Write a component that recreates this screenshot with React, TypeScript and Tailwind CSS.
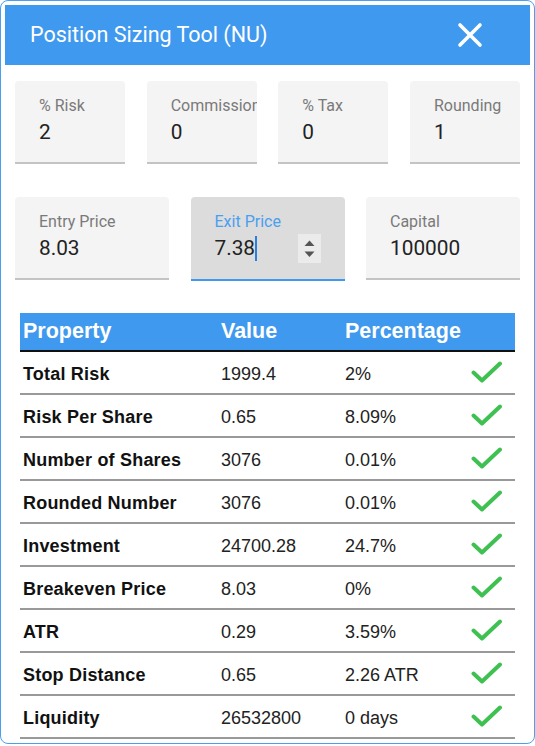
import React from "react"

const rows = [
  { name: "Total Risk", value: "1999.4", pct: "2%" },
  { name: "Risk Per Share", value: "0.65", pct: "8.09%" },
  { name: "Number of Shares", value: "3076", pct: "0.01%" },
  { name: "Rounded Number", value: "3076", pct: "0.01%" },
  { name: "Investment", value: "24700.28", pct: "24.7%" },
  { name: "Breakeven Price", value: "8.03", pct: "0%" },
  { name: "ATR", value: "0.29", pct: "3.59%" },
  { name: "Stop Distance", value: "0.65", pct: "2.26 ATR" },
  { name: "Liquidity", value: "26532800", pct: "0 days" },
]

const topFields = [
  { label: "% Risk", value: "2" },
  { label: "Commission", value: "0" },
  { label: "% Tax", value: "0" },
  { label: "Rounding", value: "1" },
]

function Field({ label, value, width }: { label: string; value: string; width: string }) {
  return (
    <div className={`${width} flex h-[83px] flex-col overflow-hidden rounded-t-[4px] border-b-2 border-[#c4c4c4] bg-[#f4f4f4] pl-6 pt-[15px]`}>
      <span className="whitespace-nowrap text-[16px] leading-[19px] text-[#7a7a7a]">{label}</span>
      <span className="mt-[5px] text-[20.8px] leading-[24px] text-[#222]">{value}</span>
    </div>
  )
}

function Check() {
  return (
    <svg width="32" height="24" viewBox="0 0 32 24" fill="none">
      <polyline points="2.5,11.5 11,19.5 29,2.5" stroke="#3fc152" strokeWidth="4" strokeLinecap="round" strokeLinejoin="round" />
    </svg>
  )
}

export default function App() {
  return (
    <div className="h-[744px] w-[535px] overflow-hidden rounded-lg border border-[#4a9ff0] bg-white p-1 font-['Roboto',sans-serif]">
      <div className="flex h-[60px] items-center justify-between bg-[#3f99ee] pl-[25px] pr-[47px]">
        <h1 className="text-[21.5px] font-normal text-white">Position Sizing Tool (NU)</h1>
        <svg width="26" height="26" viewBox="0 0 26 26" fill="none">
          <path d="M3 3L23 23M23 3L3 23" stroke="white" strokeWidth="3.6" strokeLinecap="round" />
        </svg>
      </div>

      <div className="px-[10px]">
        <div className="mt-4 flex justify-between">
          {topFields.map((f) => (
            <Field key={f.label} label={f.label} value={f.value} width="w-[110px]" />
          ))}
        </div>

        <div className="mt-[33px] flex justify-between">
          <Field label="Entry Price" value="8.03" width="w-[154px]" />
          <div className="flex h-[84px] w-[154px] flex-col overflow-hidden rounded-t-[4px] border-b-2 border-[#3f99ee] bg-[#dcdcdc] pl-6 pr-6 pt-[15px]">
            <span className="whitespace-nowrap text-[16px] leading-[19px] text-[#4a9ff0]">Exit Price</span>
            <div className="mt-[5px] flex h-[24px] items-center justify-between">
              <div className="flex items-center">
                <span className="text-[20.8px] leading-[24px] text-[#222]">7.38</span>
                <span className="h-[25px] w-[2px] bg-[#2b7fe0]" />
              </div>
              <div className="flex h-[29px] w-[23px] items-center justify-center bg-[#ebebeb]">
                <svg width="23" height="29" viewBox="0 0 23 29">
                  <polygon points="6.5,12 16.5,12 11.5,6.5" fill="#555" />
                  <polygon points="6.5,17.5 16.5,17.5 11.5,23" fill="#555" />
                </svg>
              </div>
            </div>
          </div>
          <Field label="Capital" value="100000" width="w-[154px]" />
        </div>

        <div className="mx-[5px] mt-8 font-['Liberation_Sans',Arial,sans-serif]">
          <div className="grid h-[39px] grid-cols-[201px_124px_126px_44px] items-center border-b-2 border-[#111] bg-[#3f99ee] text-[21.5px] font-bold text-white">
            <span className="pl-[3px]">Property</span>
            <span>Value</span>
            <span>Percentage</span>
            <span />
          </div>
          {rows.map((r) => (
            <div key={r.name} className="grid h-[43px] grid-cols-[201px_124px_126px_44px] items-center border-b-2 border-[#999] pt-[3px] text-[18px] text-[#222]">
              <span className="pl-[3px] font-bold tracking-[0.2px] text-[#111]">{r.name}</span>
              <span>{r.value}</span>
              <span>{r.pct}</span>
              <span className="-mt-[3px] flex items-center">
                <Check />
              </span>
            </div>
          ))}
        </div>
      </div>
    </div>
  )
}
